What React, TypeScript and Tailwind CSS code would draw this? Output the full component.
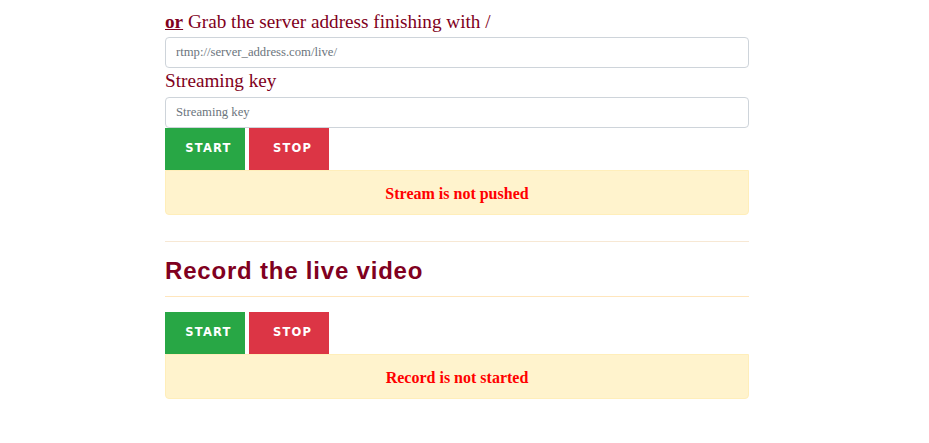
export default function App() {
  const serif = { fontFamily: '"Liberation Serif", "Times New Roman", serif' };
  return (
    <div className="w-[929px] h-[443px] bg-white overflow-hidden">
      <div className="ml-[165px] w-[584px]" style={serif}>
        <p className="pt-[10px] mb-[3px] text-[19.2px] leading-[24px] text-[#800020]">
          <b className="underline">or</b> Grab the server address finishing with /
        </p>
        <input
          className="block w-full h-[31px] px-[10px] border border-[#ced4da] rounded-[4px] text-[12.7px] text-[#495057] placeholder:text-[#6c757d] outline-none"
          style={serif}
          placeholder="rtmp://server_address.com/live/"
        />
        <p className="mt-[1px] mb-[4px] text-[19.2px] leading-[24px] text-[#800020]">Streaming key</p>
        <input
          className="block w-full h-[31px] px-[10px] border border-[#ced4da] rounded-[4px] text-[12.7px] text-[#495057] placeholder:text-[#6c757d] outline-none"
          style={serif}
          placeholder="Streaming key"
        />
        <Buttons />
        <div className="h-[45px] bg-[#fff3cd] border border-[#ffeeba] rounded-b-[4px] flex items-center justify-center pt-[2px]">
          <span className="text-[16px] font-bold text-[#ff0000]">Stream is not pushed</span>
        </div>
        <div className="mt-[26px] h-px bg-[#f7e8d4]" />
        <h2
          className="pt-[15px] pb-[11px] text-[24px] leading-[28px] font-bold tracking-[0.8px] text-[#800020]"
          style={{ fontFamily: '"Liberation Sans", Arial, sans-serif' }}
        >
          Record the live video
        </h2>
        <div className="h-px bg-[#ffe6bd]" />
        <div className="mt-[15px]">
          <Buttons />
        </div>
        <div className="h-[45px] bg-[#fff3cd] border border-[#ffeeba] rounded-b-[4px] flex items-center justify-center pt-[2px]">
          <span className="text-[16px] font-bold text-[#ff0000]">Record is not started</span>
        </div>
      </div>
    </div>
  );
}

function Buttons() {
  const f = { fontFamily: '"DejaVu Sans", Verdana, sans-serif' };
  return (
    <div className="flex gap-[4px]">
      <button
        className="w-[80px] h-[42px] bg-[#28a745] text-white text-[11.5px] font-bold tracking-[1.2px] pl-[7px] flex items-center justify-center"
        style={f}
      >
        START
      </button>
      <button
        className="w-[80px] h-[42px] bg-[#dc3545] text-white text-[11.5px] font-bold tracking-[1.2px] pl-[7px] flex items-center justify-center"
        style={f}
      >
        STOP
      </button>
    </div>
  );
}
